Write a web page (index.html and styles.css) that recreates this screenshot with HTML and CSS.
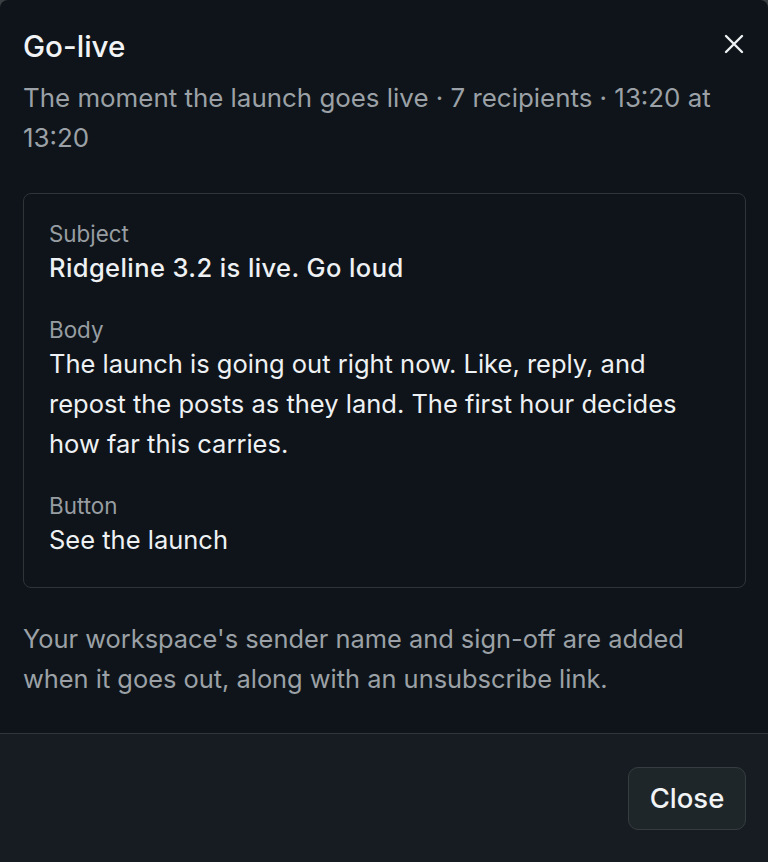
FILE: index.html
```html
<!DOCTYPE html>
<html lang="en">
<head>
<meta charset="utf-8">
<title>Go-live</title>
<link rel="stylesheet" href="styles.css">
</head>
<body>
<div class="dialog">
  <div class="content">
    <div class="header">
      <h1 class="title">Go-live</h1>
      <button class="close-x" aria-label="Close">
        <svg width="20" height="20" viewBox="0 0 20 20"><path d="M2 2 L18 18 M18 2 L2 18" stroke="#eef1f3" stroke-width="2.4" stroke-linecap="round" fill="none"/></svg>
      </button>
    </div>
    <p class="subtitle">The moment the launch goes live · 7 recipients · 13:20 at 13:20</p>
    <div class="card">
      <div class="field">
        <div class="label">Subject</div>
        <div class="value strong">Ridgeline 3.2 is live. Go loud</div>
      </div>
      <div class="field">
        <div class="label">Body</div>
        <div class="value">The launch is going out right now. Like, reply, and repost the posts as they land. The first hour decides how far this carries.</div>
      </div>
      <div class="field">
        <div class="label">Button</div>
        <div class="value">See the launch</div>
      </div>
    </div>
    <p class="note">Your workspace's sender name and sign-off are added when it goes out, along with an unsubscribe link.</p>
  </div>
  <div class="footer">
    <button class="btn">Close</button>
  </div>
</div>
</body>
</html>
```

FILE: styles.css
```css
html, body {
  margin: 0;
  padding: 0;
  background: #3a3f44;
  height: 100%;
}
body {
  font-family: Inter, "Noto Sans", "Liberation Sans", sans-serif;
  color: #eef1f3;
}
.dialog {
  width: 768px;
  height: 862px;
  background: #0e1419;
  border-radius: 8px 8px 0 0;
  display: flex;
  flex-direction: column;
  overflow: hidden;
}
.content {
  flex: 1;
  padding: 28px 22px 0 23px;
}
.header {
  display: flex;
  justify-content: space-between;
  align-items: center;
  height: 36px;
}
.title {
  margin: 0;
  font-size: 29.6px;
  line-height: 36px;
  font-weight: 500;
  color: #f1f3f5;
}
.close-x {
  background: none;
  border: 0;
  padding: 0;
  margin-right: 2px;
  width: 20px;
  height: 20px;
  display: flex;
  margin-top: -4px;
}
.subtitle {
  margin: 14px 0 0;
  font-size: 25.9px;
  line-height: 40px;
  color: #9ba1a6;
}
.card {
  margin-top: 35px;
  border: 1px solid #2e3438;
  border-radius: 8px;
  padding: 26px 25px 27px;
  display: flex;
  flex-direction: column;
  gap: 28px;
}
.label {
  font-size: 22.4px;
  line-height: 28px;
  color: #979da2;
}
.value {
  font-size: 25.5px;
  line-height: 40px;
  color: #eef1f3;
}
.value.strong {
  font-weight: 500;
  letter-spacing: 0.4px;
}
.note {
  margin: 31px 0 0;
  font-size: 25.4px;
  line-height: 40px;
  color: #9ba1a6;
}
.footer {
  height: 128px;
  border-top: 1px solid #30363a;
  background: #161c21;
  display: flex;
  justify-content: flex-end;
  align-items: center;
  padding-right: 22px;
}
.btn {
  width: 118px;
  height: 63px;
  border: 1.5px solid #363c40;
  border-radius: 10px;
  background: #1f2629;
  color: #f1f3f5;
  font-family: Inter, "Noto Sans", "Liberation Sans", sans-serif;
  font-size: 27.5px;
  font-weight: 500;
  padding: 0;
}
```
